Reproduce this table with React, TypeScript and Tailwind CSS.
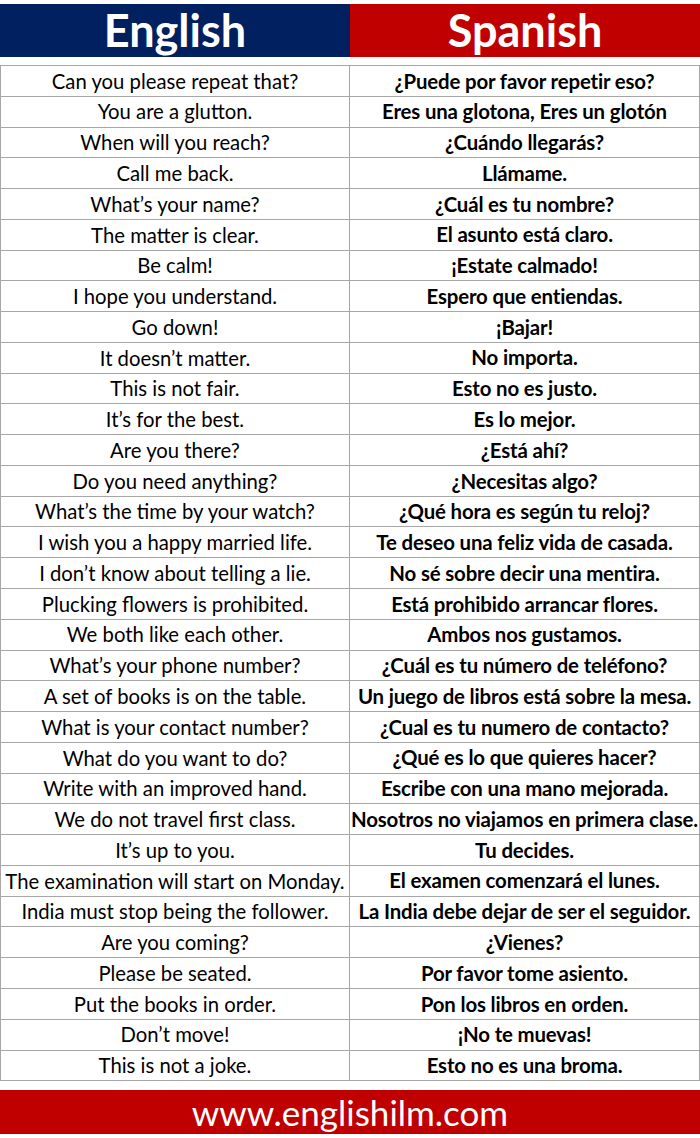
import React from "react";

const rows: [string, string][] = [
  ["Can you please repeat that?", "¿Puede por favor repetir eso?"],
  ["You are a glutton.", "Eres una glotona, Eres un glotón"],
  ["When will you reach?", "¿Cuándo llegarás?"],
  ["Call me back.", "Llámame."],
  ["What’s your name?", "¿Cuál es tu nombre?"],
  ["The matter is clear.", "El asunto está claro."],
  ["Be calm!", "¡Estate calmado!"],
  ["I hope you understand.", "Espero que entiendas."],
  ["Go down!", "¡Bajar!"],
  ["It doesn’t matter.", "No importa."],
  ["This is not fair.", "Esto no es justo."],
  ["It’s for the best.", "Es lo mejor."],
  ["Are you there?", "¿Está ahí?"],
  ["Do you need anything?", "¿Necesitas algo?"],
  ["What’s the time by your watch?", "¿Qué hora es según tu reloj?"],
  ["I wish you a happy married life.", "Te deseo una feliz vida de casada."],
  ["I don’t know about telling a lie.", "No sé sobre decir una mentira."],
  ["Plucking flowers is prohibited.", "Está prohibido arrancar flores."],
  ["We both like each other.", "Ambos nos gustamos."],
  ["What’s your phone number?", "¿Cuál es tu número de teléfono?"],
  ["A set of books is on the table.", "Un juego de libros está sobre la mesa."],
  ["What is your contact number?", "¿Cual es tu numero de contacto?"],
  ["What do you want to do?", "¿Qué es lo que quieres hacer?"],
  ["Write with an improved hand.", "Escribe con una mano mejorada."],
  ["We do not travel first class.", "Nosotros no viajamos en primera clase."],
  ["It’s up to you.", "Tu decides."],
  ["The examination will start on Monday.", "El examen comenzará el lunes."],
  ["India must stop being the follower.", "La India debe dejar de ser el seguidor."],
  ["Are you coming?", "¿Vienes?"],
  ["Please be seated.", "Por favor tome asiento."],
  ["Put the books in order.", "Pon los libros en orden."],
  ["Don’t move!", "¡No te muevas!"],
  ["This is not a joke.", "Esto no es una broma."],
];

export default function App() {
  return (
    <div
      className="w-[700px] h-[1138px] bg-white text-black overflow-hidden"
      style={{ fontFamily: "Lato, 'Open Sans', sans-serif" }}
    >
      <div className="pt-[4px] flex h-[57px]">
        <div className="w-[350px] shrink-0 bg-[#002060] flex items-center justify-center">
          <span className="text-white font-bold text-[45px] leading-none">English</span>
        </div>
        <div className="flex-1 bg-[#c00000] flex items-center justify-center">
          <span className="text-white font-bold text-[45px] leading-none">Spanish</span>
        </div>
      </div>
      <div className="mt-[8px] border-t border-[#a6a6a6] border-l border-r">
        {rows.map(([en, es], i) => (
          <div key={i} className="flex h-[30.78px] border-b border-[#a6a6a6]">
            <div className="w-[349px] shrink-0 border-r border-[#a6a6a6] flex items-center justify-center text-[20.3px] whitespace-nowrap">
              {en}
            </div>
            <div className="flex-1 min-w-0 flex items-center justify-center font-bold text-[20.4px] tracking-[-0.15px] whitespace-nowrap">
              {es}
            </div>
          </div>
        ))}
      </div>
      <div className="mt-[9px] h-[44px] bg-[#c00000] flex items-center justify-center">
        <span className="text-white text-[35px] leading-none">www.englishilm.com</span>
      </div>
    </div>
  );
}
